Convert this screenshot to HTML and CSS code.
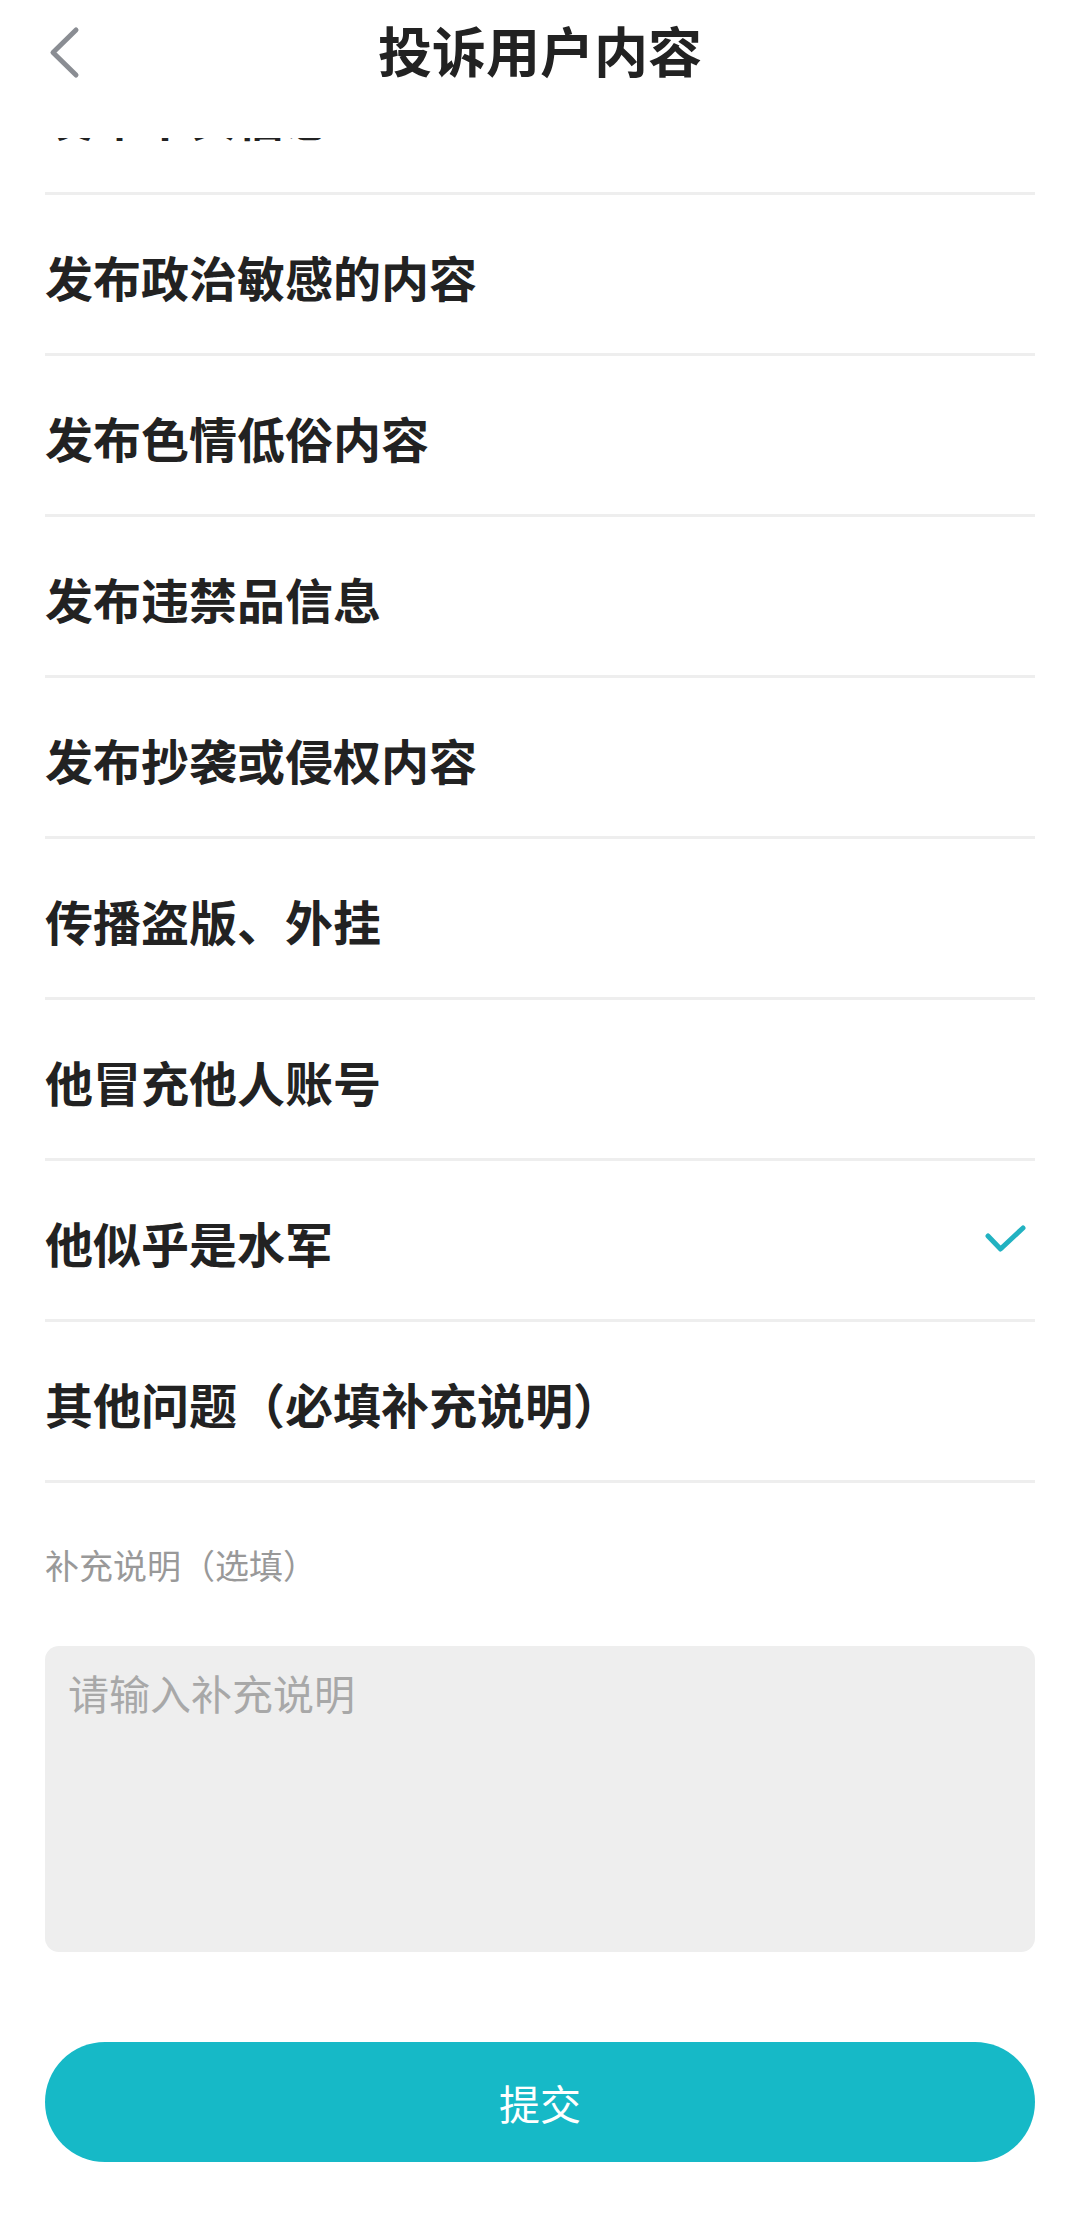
FILE: index.html
```html
<!DOCTYPE html>
<html lang="zh-CN">
<head>
  <meta charset="UTF-8" />
  <meta name="viewport" content="width=device-width, initial-scale=1" />
  <title>投诉用户内容</title>
  <link rel="stylesheet" href="styles.css">
</head>
<body>
  <div class="header">
    <a class="back" href="#">
      <svg width="40" height="60" viewBox="0 0 40 60">
        <polyline points="31,8 8,30.5 31,53" fill="none" stroke="#8a8d93" stroke-width="5" stroke-linecap="round" stroke-linejoin="round" />
      </svg>
    </a>
    <h1>投诉用户内容</h1>
  </div>

  <div class="content">
    <ul class="reasons">
      <li class="cut">发布不实信息</li>
      <li>发布政治敏感的内容</li>
      <li>发布色情低俗内容</li>
      <li>发布违禁品信息</li>
      <li>发布抄袭或侵权内容</li>
      <li>传播盗版、外挂</li>
      <li>他冒充他人账号</li>
      <li class="selected">他似乎是水军
        <svg class="check" width="46" height="34" viewBox="0 0 46 34">
          <polyline points="5,12 17.5,25 40,4" fill="none" stroke="#22b2c1" stroke-width="5" stroke-linecap="round" stroke-linejoin="round" />
        </svg>
      </li>
      <li>其他问题（必填补充说明）</li>
    </ul>

    <div class="extra">
      <p class="label">补充说明（选填）</p>
      <textarea placeholder="请输入补充说明"></textarea>
    </div>

    <button class="submit">提交</button>
  </div>
</body>
</html>
```

FILE: styles.css
```css
* { margin: 0; padding: 0; box-sizing: border-box; }
body {
  font-family: "Noto Sans CJK SC", "Noto Sans", sans-serif;
  background: #fff;
  color: #222;
  width: 1080px;
  height: 2228px;
  overflow: hidden;
}
.header {
  position: relative;
  z-index: 2;
  height: 138px;
  background: #fff;
  display: flex;
  align-items: flex-start;
  justify-content: center;
}
.header h1 {
  font-size: 54px;
  font-weight: 700;
  line-height: 100px;
  color: #222;
}
.back {
  position: absolute;
  left: 45px;
  top: 22px;
  display: block;
  width: 40px;
  height: 60px;
}
.content {
  padding: 0 45px;
}
.reasons {
  list-style: none;
}
.reasons li {
  height: 161px;
  border-bottom: 3px solid #eeeeee;
  display: flex;
  align-items: center;
  justify-content: space-between;
  padding-top: 4px;
  font-size: 48px;
  font-weight: 700;
  color: #222;
}
.reasons li.cut {
  margin-top: -104px;
}
.check {
  margin-right: 6px;
  margin-top: -2px;
}
.extra {
  padding-top: 56px;
}
.label {
  font-size: 34px;
  line-height: 52px;
  color: #999;
}
textarea {
  display: block;
  width: 100%;
  height: 306px;
  margin-top: 55px;
  border: none;
  border-radius: 14px;
  background: #eeeeee;
  padding: 16px 23px;
  font-family: inherit;
  font-size: 41px;
  line-height: 60px;
  color: #333;
  resize: none;
  outline: none;
}
textarea::placeholder { color: #a8a8a8; }
.submit {
  display: block;
  width: 100%;
  height: 120px;
  margin-top: 90px;
  border: none;
  border-radius: 60px;
  background: #16b9c7;
  color: #fff;
  font-family: inherit;
  font-size: 41px;
}
```
